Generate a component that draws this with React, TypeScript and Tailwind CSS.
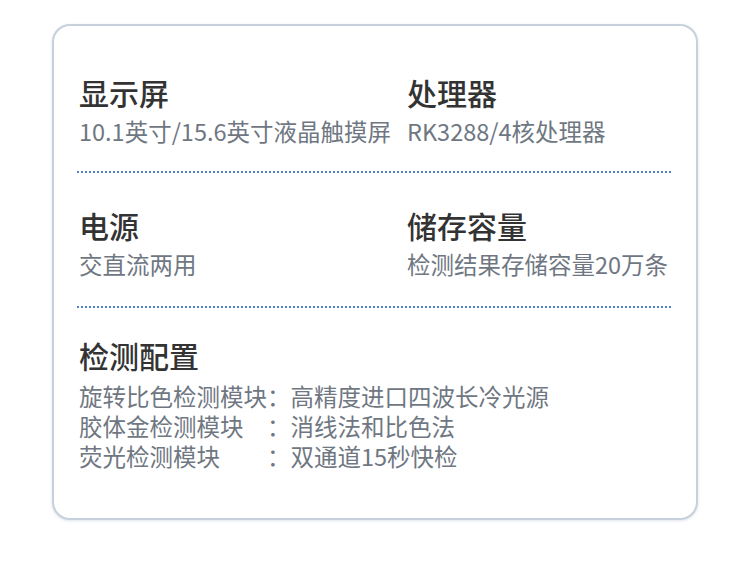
import React from "react";

const font = { fontFamily: '"Noto Sans CJK SC", "Noto Sans", sans-serif' };

function Item({ title, sub }: { title: string; sub: string }) {
  return (
    <div>
      <div className="text-[30px] leading-[48px] font-medium text-[#333333]">{title}</div>
      <div className="text-[23.5px] leading-[30px] text-[#6f7782] whitespace-nowrap">{sub}</div>
    </div>
  );
}

function Dots() {
  return <div className="-ml-[2px] border-t-2 border-dotted border-[#4f80c4]" />;
}

export default function App() {
  const rows: [string, string][] = [
    ["旋转比色检测模块", "高精度进口四波长冷光源"],
    ["胶体金检测模块", "消线法和比色法"],
    ["荧光检测模块", "双通道15秒快检"],
  ];
  return (
    <div className="w-[750px] h-[587px] bg-white pt-[24px]" style={font}>
      <div className="mx-[52px] h-[496px] rounded-[18px] border-2 border-[#c7d0dc] bg-white px-[25px] pt-[42px] shadow-[0_1px_3px_rgba(150,165,190,0.3)]">
        <div className="grid grid-cols-[328px_1fr] pb-[25px]">
          <Item title="显示屏" sub="10.1英寸/15.6英寸液晶触摸屏" />
          <Item title="处理器" sub="RK3288/4核处理器" />
        </div>
        <Dots />
        <div className="grid grid-cols-[328px_1fr] pt-[28px] pb-[27px]">
          <Item title="电源" sub="交直流两用" />
          <Item title="储存容量" sub="检测结果存储容量20万条" />
        </div>
        <Dots />
        <div className="pt-[23px]">
          <div className="text-[30px] leading-[48px] font-medium text-[#333333]">检测配置</div>
          <div className="mt-[2px] grid grid-cols-[188px_23.5px_1fr] text-[23.5px] leading-[30px] text-[#6f7782]">
            {rows.map(([k, v]) => (
              <React.Fragment key={k}>
                <span className="whitespace-nowrap">{k}</span>
                <span>：</span>
                <span className="whitespace-nowrap">{v}</span>
              </React.Fragment>
            ))}
          </div>
        </div>
      </div>
    </div>
  );
}
